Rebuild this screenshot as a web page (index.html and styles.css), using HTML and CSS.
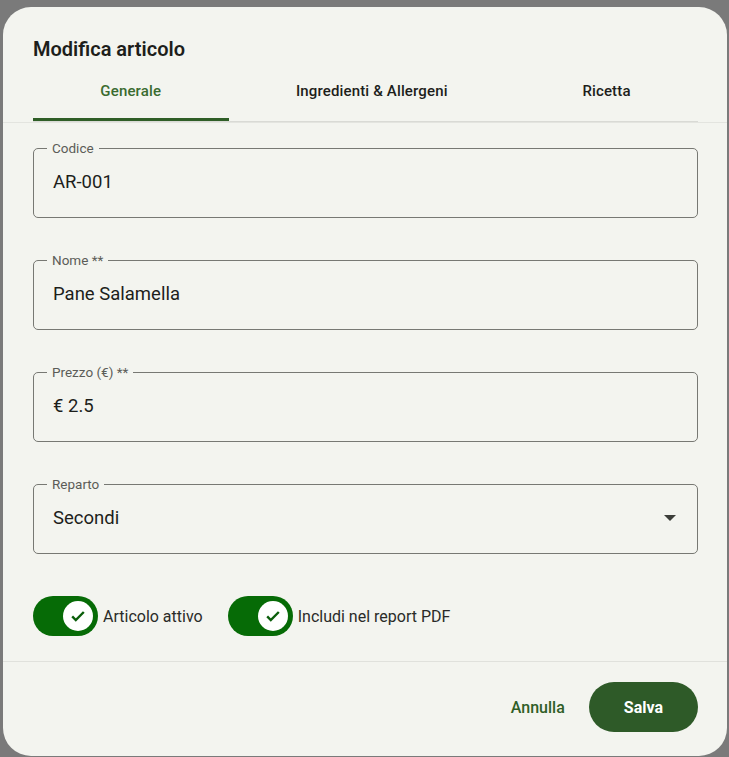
FILE: index.html
```html
<!DOCTYPE html>
<html lang="it">
<head>
<meta charset="utf-8">
<title>Modifica articolo</title>
<link rel="stylesheet" href="styles.css">
</head>
<body>
<div class="backdrop">
  <div class="dialog">
    <h2 class="dialog-title">Modifica articolo</h2>
    <div class="tabs">
      <div class="tab active">Generale</div>
      <div class="tab">Ingredienti &amp; Allergeni</div>
      <div class="tab">Ricetta</div>
    </div>
    <div class="dialog-content">
      <div class="field">
        <span class="field-label">Codice</span>
        <span class="field-value">AR-001</span>
      </div>
      <div class="field">
        <span class="field-label">Nome **</span>
        <span class="field-value">Pane Salamella</span>
      </div>
      <div class="field">
        <span class="field-label">Prezzo (€) **</span>
        <span class="field-value">€ 2.5</span>
      </div>
      <div class="field select">
        <span class="field-label">Reparto</span>
        <span class="field-value">Secondi</span>
        <svg class="select-arrow" width="12" height="6" viewBox="0 0 12 6"><path d="M0 0h12L6 6z" fill="#3b3d39"/></svg>
      </div>
      <div class="toggles">
        <label class="toggle">
          <span class="track"><span class="thumb"><svg width="18" height="18" viewBox="0 0 18 18"><path d="M3.2 9.4l3.6 3.6 8-8" fill="none" stroke="#0b5e0b" stroke-width="2.4"/></svg></span></span>
          <span class="toggle-text">Articolo attivo</span>
        </label>
        <label class="toggle">
          <span class="track"><span class="thumb"><svg width="18" height="18" viewBox="0 0 18 18"><path d="M3.2 9.4l3.6 3.6 8-8" fill="none" stroke="#0b5e0b" stroke-width="2.4"/></svg></span></span>
          <span class="toggle-text">Includi nel report PDF</span>
        </label>
      </div>
    </div>
    <div class="dialog-actions">
      <button class="btn-text">Annulla</button>
      <button class="btn-filled">Salva</button>
    </div>
  </div>
</div>
</body>
</html>
```

FILE: styles.css
```css
* { box-sizing: border-box; }

html, body {
  margin: 0;
  height: 100%;
}

body {
  background: #7a7a7a;
  font-family: Roboto, "Liberation Sans", sans-serif;
  color: #1d1e1b;
  overflow: hidden;
}

.backdrop {
  padding: 7px 2px 0 3px;
}

.dialog {
  width: 724px;
  height: 749px;
  background: #f3f4ef;
  border-radius: 28px;
  display: flex;
  flex-direction: column;
  overflow: hidden;
}

.dialog-title {
  margin: 29px 30px 0;
  font-size: 20px;
  line-height: 26px;
  font-weight: 600;
  color: #1d1e1b;
}

.tabs {
  display: flex;
  margin: 8px 29px 0 30px;
  border-bottom: 1px solid #d9dad5;
}

.tab {
  flex: 1 1 auto;
  height: 51px;
  padding: 0 24px 6px;
  display: flex;
  align-items: center;
  justify-content: center;
  font-size: 15px;
  letter-spacing: 0.15px;
  font-weight: 500;
  color: #1d1e1b;
  border-bottom: 3px solid transparent;
  white-space: nowrap;
}

.tab.active {
  color: #3a6b30;
  border-bottom-color: #2f5e27;
}

.dialog-content {
  flex: 1;
  border-top: 1px solid #e3e4df;
  border-bottom: 1px solid #e0e1dc;
  padding: 25px 29px 25px 30px;
  display: flex;
  flex-direction: column;
  gap: 42px;
}

.field {
  position: relative;
  height: 70px;
  border: 1px solid #777873;
  border-radius: 5px;
  display: flex;
  align-items: center;
  padding: 0 19px 3px;
}

.field-label {
  position: absolute;
  top: -9px;
  left: 13px;
  padding: 0 5px;
  background: #f3f4ef;
  font-size: 13.5px;
  line-height: 16px;
  color: #5b5c58;
}

.field-value {
  font-size: 18.5px;
  color: #1d1e1b;
}

.select {
  justify-content: space-between;
}

.select-arrow {
  margin-right: 2px;
}

.toggles {
  display: flex;
  gap: 25px;
  margin-top: 0;
}

.toggle {
  display: flex;
  align-items: center;
  gap: 5px;
}

.track {
  width: 65px;
  height: 40px;
  border-radius: 20px;
  background: #066b06;
  display: flex;
  align-items: center;
  justify-content: flex-end;
  padding-right: 5px;
}

.thumb {
  width: 30px;
  height: 30px;
  border-radius: 50%;
  background: #ffffff;
  display: flex;
  align-items: center;
  justify-content: center;
}

.toggle-text {
  font-size: 16px;
  color: #2a2b28;
}

.dialog-actions {
  height: 94px;
  display: flex;
  justify-content: flex-end;
  align-items: flex-start;
  gap: 10px;
  padding: 20px 29px 0;
}

.btn-text,
.btn-filled {
  height: 50px;
  border: none;
  border-radius: 25px;
  font-family: Roboto, "Liberation Sans", sans-serif;
  font-size: 16px;
  cursor: pointer;
}

.btn-text {
  background: transparent;
  color: #2f5e27;
  font-weight: 500;
  padding: 0 14px;
}

.btn-filled {
  background: #2e5a28;
  color: #ffffff;
  font-weight: 700;
  padding: 0 35px;
}
```
